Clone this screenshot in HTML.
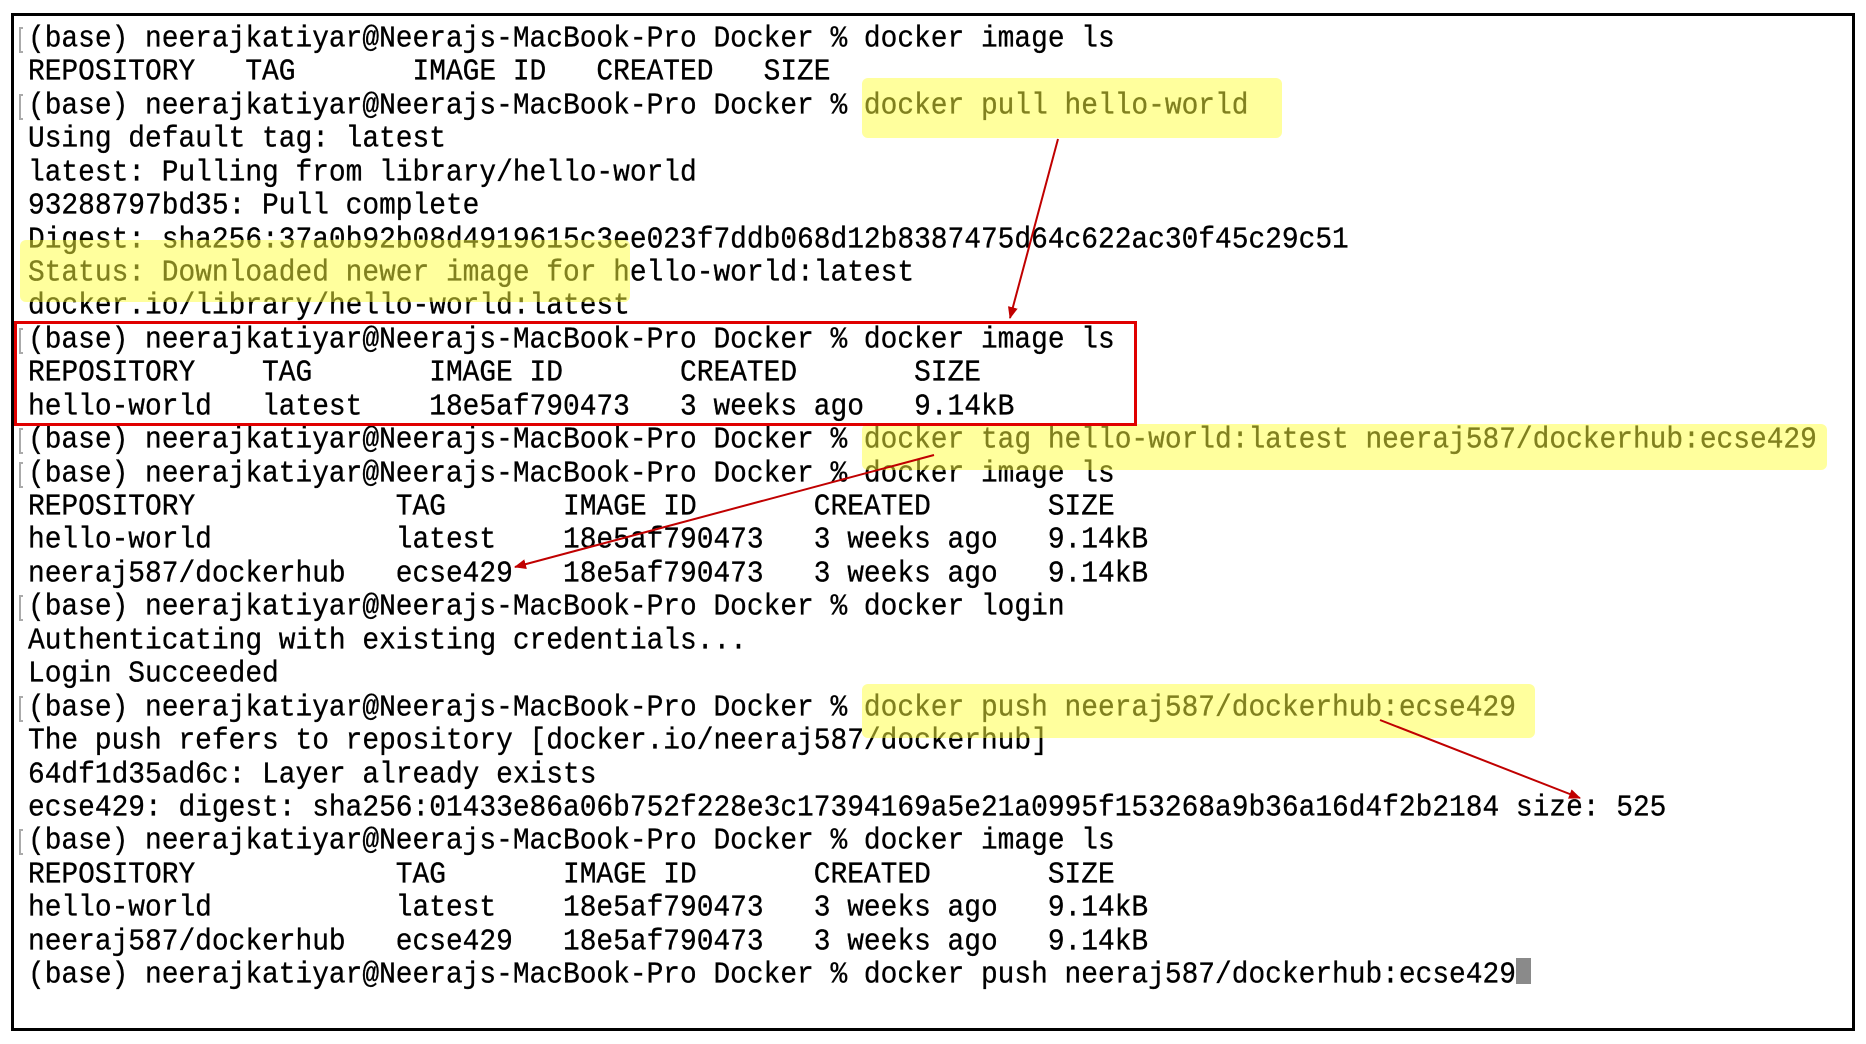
<!DOCTYPE html>
<html><head><meta charset="utf-8"><style>
html,body{margin:0;padding:0;background:#fff;width:1866px;height:1044px;overflow:hidden;position:relative}
.frame{position:absolute;left:11px;top:13px;width:1838px;height:1012px;border:3px solid #000;box-sizing:content-box}
.l{position:absolute;left:28px;font-family:"Liberation Mono",monospace;font-size:27.86px;line-height:33px;white-space:pre;color:#000;transform:scaleY(1.1);transform-origin:0 50%;-webkit-text-stroke:0.3px #000}
.br{position:absolute;left:19px;width:4px;height:26px;border-left:2px solid #aaa;border-top:2px solid #aaa;border-bottom:2px solid #aaa;box-sizing:border-box}
.hl{position:absolute;background:rgba(255,255,60,0.5);border-radius:6px}
.red{position:absolute;left:14px;top:321px;width:1117px;height:99px;border:3px solid #e00000}
.cur{position:absolute;left:1516px;top:958px;width:15px;height:26px;background:#8a8a8a}
svg{position:absolute;left:0;top:0}
</style></head><body>
<div class="frame"></div>
<div class="l" style="top:23px">(base) neerajkatiyar@Neerajs-MacBook-Pro Docker % docker image ls</div>
<div class="l" style="top:56px">REPOSITORY   TAG       IMAGE ID   CREATED   SIZE</div>
<div class="l" style="top:90px">(base) neerajkatiyar@Neerajs-MacBook-Pro Docker % docker pull hello-world</div>
<div class="l" style="top:123px">Using default tag: latest</div>
<div class="l" style="top:157px">latest: Pulling from library/hello-world</div>
<div class="l" style="top:190px">93288797bd35: Pull complete</div>
<div class="l" style="top:224px">Digest: sha256:37a0b92b08d4919615c3ee023f7ddb068d12b8387475d64c622ac30f45c29c51</div>
<div class="l" style="top:257px">Status: Downloaded newer image for hello-world:latest</div>
<div class="l" style="top:290px">docker.io/library/hello-world:latest</div>
<div class="l" style="top:324px">(base) neerajkatiyar@Neerajs-MacBook-Pro Docker % docker image ls</div>
<div class="l" style="top:357px">REPOSITORY    TAG       IMAGE ID       CREATED       SIZE</div>
<div class="l" style="top:391px">hello-world   latest    18e5af790473   3 weeks ago   9.14kB</div>
<div class="l" style="top:424px">(base) neerajkatiyar@Neerajs-MacBook-Pro Docker % docker tag hello-world:latest neeraj587/dockerhub:ecse429</div>
<div class="l" style="top:458px">(base) neerajkatiyar@Neerajs-MacBook-Pro Docker % docker image ls</div>
<div class="l" style="top:491px">REPOSITORY            TAG       IMAGE ID       CREATED       SIZE</div>
<div class="l" style="top:524px">hello-world           latest    18e5af790473   3 weeks ago   9.14kB</div>
<div class="l" style="top:558px">neeraj587/dockerhub   ecse429   18e5af790473   3 weeks ago   9.14kB</div>
<div class="l" style="top:591px">(base) neerajkatiyar@Neerajs-MacBook-Pro Docker % docker login</div>
<div class="l" style="top:625px">Authenticating with existing credentials...</div>
<div class="l" style="top:658px">Login Succeeded</div>
<div class="l" style="top:692px">(base) neerajkatiyar@Neerajs-MacBook-Pro Docker % docker push neeraj587/dockerhub:ecse429</div>
<div class="l" style="top:725px">The push refers to repository [docker.io/neeraj587/dockerhub]</div>
<div class="l" style="top:759px">64df1d35ad6c: Layer already exists</div>
<div class="l" style="top:792px">ecse429: digest: sha256:01433e86a06b752f228e3c17394169a5e21a0995f153268a9b36a16d4f2b2184 size: 525</div>
<div class="l" style="top:825px">(base) neerajkatiyar@Neerajs-MacBook-Pro Docker % docker image ls</div>
<div class="l" style="top:859px">REPOSITORY            TAG       IMAGE ID       CREATED       SIZE</div>
<div class="l" style="top:892px">hello-world           latest    18e5af790473   3 weeks ago   9.14kB</div>
<div class="l" style="top:926px">neeraj587/dockerhub   ecse429   18e5af790473   3 weeks ago   9.14kB</div>
<div class="l" style="top:959px">(base) neerajkatiyar@Neerajs-MacBook-Pro Docker % docker push neeraj587/dockerhub:ecse429</div>
<div class="cur"></div>
<div class="br" style="top:27px"></div>
<div class="br" style="top:94px"></div>
<div class="br" style="top:328px"></div>
<div class="br" style="top:428px"></div>
<div class="br" style="top:462px"></div>
<div class="br" style="top:595px"></div>
<div class="br" style="top:696px"></div>
<div class="br" style="top:829px"></div>
<div class="hl" style="left:862px;top:78px;width:420px;height:60px"></div>
<div class="hl" style="left:20px;top:240px;width:610px;height:62px"></div>
<div class="hl" style="left:862px;top:424px;width:965px;height:46px"></div>
<div class="hl" style="left:862px;top:684px;width:673px;height:54px"></div>
<div class="red"></div>
<svg width="1866" height="1044">
<defs><marker id="a" markerWidth="12" markerHeight="10" refX="11" refY="5" orient="auto" markerUnits="userSpaceOnUse"><path d="M0,0 L12,5 L0,10 Z" fill="#c00000"/></marker></defs>
<g stroke="#c00000" stroke-width="2" fill="none">
<line x1="1058" y1="139" x2="1010" y2="318" marker-end="url(#a)"/>
<line x1="934" y1="455" x2="515" y2="567" marker-end="url(#a)"/>
<line x1="1380" y1="720" x2="1580" y2="798" marker-end="url(#a)"/>
</g></svg>
</body></html>
